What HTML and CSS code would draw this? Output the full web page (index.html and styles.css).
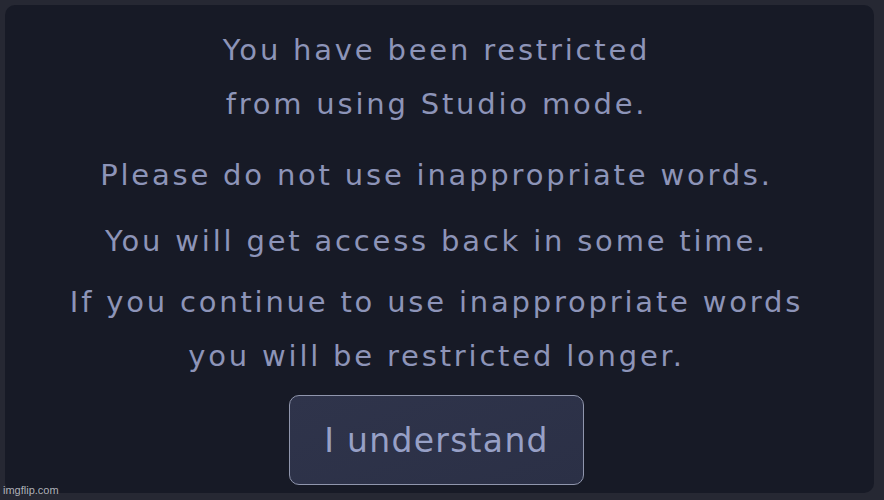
FILE: index.html
```html
<!DOCTYPE html>
<html>
<head>
	<meta charset="utf-8">
	<title>Restricted</title>
	<link rel="stylesheet" href="styles.css">
</head>
<body>
	<div class="frame">
		<div class="panel">
			<p class="msg msg-first">You have been restricted<br>from using Studio mode.</p>
			<p class="msg msg-second">Please do not use inappropriate words.</p>
			<p class="msg msg-third">You will get access back in some time.</p>
			<p class="msg msg-fourth">If you continue to use inappropriate words<br>you will be restricted longer.</p>
			<button class="ok">I understand</button>
		</div>
		<span class="mark">imgflip.com</span>
	</div>
</body>
</html>
```

FILE: styles.css
```css
*{
	margin: 0;
	padding: 0;
	box-sizing: border-box;
}
html, body{
	width: 884px;
	height: 500px;
	overflow: hidden;
}
body{
	background: #262833;
	font-family: "DejaVu Sans", sans-serif;
}
.frame{
	position: relative;
	width: 884px;
	height: 500px;
	padding: 5px 10px 7px 5px;
}
.panel{
	height: 100%;
	background: #171a26;
	border-radius: 10px;
	display: flex;
	flex-direction: column;
	align-items: center;
	padding: 18px 6px 0 0;
}
.msg{
	color: #8d94b8;
	font-size: 29px;
	line-height: 54px;
	text-align: center;
	letter-spacing: 2.8px;
}
.msg-second{
	margin-top: 17px;
}
.msg-third{
	margin-top: 12px;
}
.msg-fourth{
	margin-top: 7px;
}
.ok{
	margin-top: 12px;
	width: 295px;
	height: 90px;
	background: linear-gradient(160deg, #2f344b, #2b3046);
	border: 1.5px solid #9096ad;
	border-radius: 10px;
	color: #97a0c6;
	font-family: "DejaVu Sans", sans-serif;
	font-size: 33px;
	letter-spacing: 1.3px;
}
.mark{
	position: absolute;
	left: 3px;
	bottom: 4px;
	font-family: "Liberation Sans", sans-serif;
	font-size: 11px;
	color: #c8cad0;
	opacity: 0.85;
}
```
